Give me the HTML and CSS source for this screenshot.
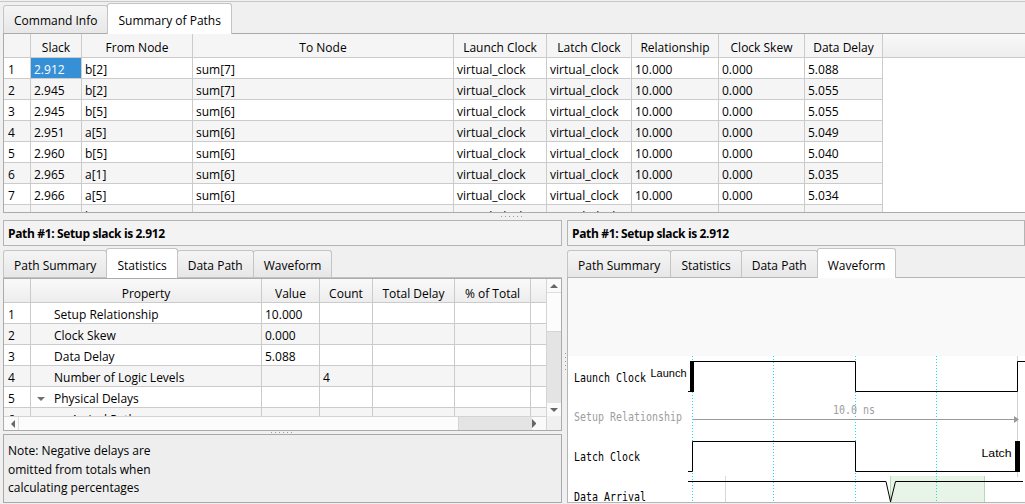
FILE: index.html
```html
<!DOCTYPE html>
<html>
<head>
<meta charset="utf-8">
<title>Timing Report</title>
<link rel="stylesheet" href="styles.css">
</head>
<body>
<div class="app">
  <div class="top-rule"></div>
  <div class="tabbar main">
    <div class="tab">Command Info</div>
    <div class="tab active">Summary of Paths</div>
  </div>
  <div class="paths-frame">
    <div class="prow head">
      <div class="c"></div><div class="c">Slack</div><div class="c">From Node</div><div class="c">To Node</div><div class="c">Launch Clock</div><div class="c">Latch Clock</div><div class="c">Relationship</div><div class="c">Clock Skew</div><div class="c">Data Delay</div><div class="c fill"></div>
    </div>
    <div class="prow"><div class="c n">1</div><div class="c sel">2.912</div><div class="c">b[2]</div><div class="c">sum[7]</div><div class="c">virtual_clock</div><div class="c">virtual_clock</div><div class="c">10.000</div><div class="c">0.000</div><div class="c">5.088</div><div class="c fill"></div></div>
    <div class="prow"><div class="c n">2</div><div class="c">2.945</div><div class="c">b[2]</div><div class="c">sum[7]</div><div class="c">virtual_clock</div><div class="c">virtual_clock</div><div class="c">10.000</div><div class="c">0.000</div><div class="c">5.055</div><div class="c fill"></div></div>
    <div class="prow"><div class="c n">3</div><div class="c">2.945</div><div class="c">b[5]</div><div class="c">sum[6]</div><div class="c">virtual_clock</div><div class="c">virtual_clock</div><div class="c">10.000</div><div class="c">0.000</div><div class="c">5.055</div><div class="c fill"></div></div>
    <div class="prow"><div class="c n">4</div><div class="c">2.951</div><div class="c">a[5]</div><div class="c">sum[6]</div><div class="c">virtual_clock</div><div class="c">virtual_clock</div><div class="c">10.000</div><div class="c">0.000</div><div class="c">5.049</div><div class="c fill"></div></div>
    <div class="prow"><div class="c n">5</div><div class="c">2.960</div><div class="c">b[5]</div><div class="c">sum[6]</div><div class="c">virtual_clock</div><div class="c">virtual_clock</div><div class="c">10.000</div><div class="c">0.000</div><div class="c">5.040</div><div class="c fill"></div></div>
    <div class="prow"><div class="c n">6</div><div class="c">2.965</div><div class="c">a[1]</div><div class="c">sum[6]</div><div class="c">virtual_clock</div><div class="c">virtual_clock</div><div class="c">10.000</div><div class="c">0.000</div><div class="c">5.035</div><div class="c fill"></div></div>
    <div class="prow"><div class="c n">7</div><div class="c">2.966</div><div class="c">a[5]</div><div class="c">sum[6]</div><div class="c">virtual_clock</div><div class="c">virtual_clock</div><div class="c">10.000</div><div class="c">0.000</div><div class="c">5.034</div><div class="c fill"></div></div>
    <div class="prow"><div class="c n">8</div><div class="c">2.967</div><div class="c">b[4]</div><div class="c">sum[6]</div><div class="c">virtual_clock</div><div class="c">virtual_clock</div><div class="c">10.000</div><div class="c">0.000</div><div class="c">5.033</div><div class="c fill"></div></div>
  </div>
  <div class="hsplit"><span class="dots-h"></span></div>
  <div class="bottom">
    <div class="left">
      <div class="pathbox">Path #1: Setup slack is 2.912</div>
      <div class="tabbar sub">
        <div class="tab">Path Summary</div>
        <div class="tab active">Statistics</div>
        <div class="tab">Data Path</div>
        <div class="tab">Waveform</div>
      </div>
      <div class="stats-pane">
        <div class="stats-table">
          <div class="st-upper">
            <div class="st-body">
              <div class="srow head"><div class="c"></div><div class="c">Property</div><div class="c">Value</div><div class="c">Count</div><div class="c">Total Delay</div><div class="c">% of Total</div><div class="c fill"></div></div>
              <div class="srow"><div class="c n">1</div><div class="c prop">Setup Relationship</div><div class="c">10.000</div><div class="c"></div><div class="c"></div><div class="c"></div><div class="c fill"></div></div>
              <div class="srow"><div class="c n">2</div><div class="c prop">Clock Skew</div><div class="c">0.000</div><div class="c"></div><div class="c"></div><div class="c"></div><div class="c fill"></div></div>
              <div class="srow"><div class="c n">3</div><div class="c prop">Data Delay</div><div class="c">5.088</div><div class="c"></div><div class="c"></div><div class="c"></div><div class="c fill"></div></div>
              <div class="srow"><div class="c n">4</div><div class="c prop">Number of Logic Levels</div><div class="c"></div><div class="c">4</div><div class="c"></div><div class="c"></div><div class="c fill"></div></div>
              <div class="srow"><div class="c n">5</div><div class="c prop"><span class="twisty"></span>Physical Delays</div><div class="c"></div><div class="c"></div><div class="c"></div><div class="c"></div><div class="c fill"></div></div>
              <div class="srow"><div class="c n">6</div><div class="c prop deep">Arrival Path</div><div class="c"></div><div class="c"></div><div class="c"></div><div class="c"></div><div class="c fill"></div></div>
            </div>
            <div class="vscroll">
              <div class="sb-btn"><span class="tri up"></span></div>
              <div class="thumb-v"></div>
              <div class="track"></div>
              <div class="sb-btn"><span class="tri down"></span></div>
            </div>
          </div>
          <div class="hbar">
            <div class="hscroll">
              <div class="sb-btn"><span class="tri left"></span></div>
              <div class="thumb-h"></div>
              <div class="track"></div>
              <div class="sb-btn"><span class="tri right"></span></div>
            </div>
            <div class="corner"></div>
          </div>
        </div>
        <div class="hsplit small"><span class="dots-h"></span></div>
        <div class="note">Note: Negative delays are<br>omitted from totals when<br>calculating percentages</div>
      </div>
    </div>
    <div class="vsplit"><span class="dots-v"></span></div>
    <div class="right">
      <div class="pathbox">Path #1: Setup slack is 2.912</div>
      <div class="tabbar sub">
        <div class="tab">Path Summary</div>
        <div class="tab">Statistics</div>
        <div class="tab">Data Path</div>
        <div class="tab active">Waveform</div>
      </div>
      <div class="wave-pane">
        <svg class="wave" width="457" height="224" viewBox="568 278 457 224" xmlns="http://www.w3.org/2000/svg">
          <rect x="568" y="278" width="457" height="78" fill="#f9f9f9"/>
          <rect x="890" y="476" width="94" height="30" fill="#e8f4e8"/>
          <line x1="890.5" y1="476" x2="890.5" y2="504" stroke="#b2dcb2"/>
          <line x1="984.5" y1="476" x2="984.5" y2="504" stroke="#b2dcb2"/>
          <line x1="725.5" y1="476" x2="725.5" y2="504" stroke="#d8d8d8"/>
          <line x1="1017.5" y1="356" x2="1017.5" y2="477" stroke="#d2d2d2"/>
          <g stroke="#19dcef" stroke-dasharray="1 2">
            <line x1="692.5" y1="356" x2="692.5" y2="504"/>
            <line x1="773.5" y1="356" x2="773.5" y2="504"/>
            <line x1="855.5" y1="356" x2="855.5" y2="504"/>
            <line x1="936.5" y1="356" x2="936.5" y2="504"/>
          </g>
          <g class="mono">
            <text x="574" y="382" textLength="72" lengthAdjust="spacingAndGlyphs">Launch Clock</text>
            <text x="574" y="421" textLength="108" lengthAdjust="spacingAndGlyphs" class="dim">Setup Relationship</text>
            <text x="833" y="414" textLength="42" lengthAdjust="spacingAndGlyphs" class="dim">10.0 ns</text>
            <text x="574" y="461" textLength="66" lengthAdjust="spacingAndGlyphs">Latch Clock</text>
            <text x="574" y="501" textLength="72" lengthAdjust="spacingAndGlyphs">Data Arrival</text>
          </g>
          <g class="sans">
            <text x="650.5" y="377" textLength="36" lengthAdjust="spacingAndGlyphs">Launch</text>
            <text x="981.5" y="457" textLength="30" lengthAdjust="spacingAndGlyphs">Latch</text>
          </g>
          <g fill="none" stroke="#000" stroke-width="1">
            <path d="M688 391.5 H690"/>
            <path d="M694 361.5 H855.5 V391.5 H1017.5 V361.5 H1025"/>
            <path d="M688 471.5 H692.5 V441.5 H855.5 V471.5 H1015"/>
            <path d="M688 481.5 H886 L891.5 506"/>
            <path d="M895.5 481.5 L889.5 506"/>
            <path d="M895.5 481.5 H1023"/>
          </g>
          <rect x="690" y="361" width="4" height="31" fill="#000"/>
          <rect x="1015" y="441" width="5" height="31" fill="#000"/>
          <line x1="693" y1="419.5" x2="1015" y2="419.5" stroke="#9a9a9a"/>
          <polygon points="1014,416 1019,419.5 1014,423" fill="#9a9a9a"/>
        </svg>
      </div>
    </div>
  </div>
</div>
</body>
</html>
```
FILE: styles.css
```css
* { box-sizing: border-box; }
html, body { margin: 0; padding: 0; }
body {
  width: 1025px;
  height: 504px;
  overflow: hidden;
  background: #f0f0f0;
  font-family: "Open Sans", "Noto Sans", sans-serif;
  font-size: 12px;
  color: #000;
}
.app { display: flex; flex-direction: column; height: 504px; }

.top-rule { height: 2px; margin-top: 1px; border-top: 1px solid #c8c8c8; }

/* tabs */
.tabbar { display: flex; align-items: flex-end; flex: none; }
.tabbar.main { height: 30px; padding-left: 3px; }
.tabbar.sub { height: 31px; }
.tab {
  height: 28px;
  padding: 0 10px 4px;
  border: 1px solid #c4c4c4;
  border-bottom: none;
  border-radius: 3px 3px 0 0;
  background: linear-gradient(#f5f5f5, #e7e7e7);
  display: flex;
  align-items: flex-end;
  line-height: 16px;
  margin-right: -1px;
  white-space: nowrap;
}
.tab.active {
  height: 31px;
  margin-bottom: -1px;
  padding-bottom: 5px;
  background: #fff;
  position: relative;
  z-index: 2;
}
.tabbar.sub .tab { height: 27px; padding-bottom: 3px; }
.tabbar.sub .tab.active { height: 30px; padding-bottom: 4px; }

/* top table */
.paths-frame {
  height: 180px;
  flex: none;
  margin-left: 3px;
  border: 1px solid #ababab;
  border-right: none;
  background: #fff;
  overflow: hidden;
}
.prow {
  display: grid;
  grid-template-columns: 27px 51px 111px 261px 93px 85px 87px 86px 78px 1fr;
}
.prow .c, .srow .c {
  height: 21px;
  padding: 4px 0 0 3px;
  line-height: 16px;
  border-right: 1px solid #cbcbcb;
  border-bottom: 1px solid #cbcbcb;
  white-space: nowrap;
  overflow: hidden;
}
.prow .c.n, .srow .c.n { padding-left: 4px; }
.prow .c.fill { border: none; }
.prow:nth-child(odd) .c:not(.fill),
.srow:nth-child(odd) .c { background: #f5f5f5; }
.prow.head .c, .srow.head .c {
  height: 24px;
  padding: 6px 0 0;
  text-align: center;
  background: linear-gradient(#f9f9f9, #ededed);
}
.srow.head .c { padding-top: 7px; }
.prow.head .c.fill { border-bottom: 1px solid #cbcbcb; }
.prow .c.sel { background: #3590d6; color: #fff; }

/* splitters */
.hsplit { height: 7px; flex: none; display: flex; justify-content: center; align-items: center; }
.hsplit.small { height: 3px; align-items: flex-start; padding-top: 1px; }
.dots-h {
  width: 24px;
  height: 1px;
  background: repeating-linear-gradient(90deg, #9c9c9c 0 1px, transparent 1px 4px);
}
.vsplit { width: 5px; flex: none; display: flex; align-items: center; justify-content: center; padding-left: 1px; }
.dots-v {
  width: 1px;
  height: 18px;
  background: repeating-linear-gradient(180deg, #9c9c9c 0 1px, transparent 1px 4px);
}

/* bottom */
.bottom { flex: 1; display: flex; min-height: 0; }
.left { width: 562px; flex: none; padding-left: 3px; display: flex; flex-direction: column; }
.right { flex: 1; display: flex; flex-direction: column; padding-bottom: 1px; min-width: 0; }

.pathbox {
  height: 26px;
  flex: none;
  border: 1px solid #b4b4b4;
  background: #f3f3f3;
  padding: 5px 0 0 4px;
  line-height: 16px;
  font-weight: 700;
  letter-spacing: -0.35px;
  white-space: nowrap;
}

.stats-pane { flex: 1; display: flex; flex-direction: column; border-top: 1px solid #c2c2c2; min-height: 0; }
.stats-table { height: 153px; flex: none; border: 1px solid #ababab; background: #fff; display: flex; flex-direction: column; }
.st-upper { height: 137px; display: flex; }
.st-body { width: 542px; overflow: hidden; }
.srow { display: grid; grid-template-columns: 27px 231px 58px 53px 82px 76px 15px; }
.srow .c.fill { border-right: none; }
.srow .c.prop { padding-left: 23px; }
.srow .c.prop.deep { padding-left: 40px; }
.twisty {
  display: inline-block;
  width: 0;
  height: 0;
  border-left: 4px solid transparent;
  border-right: 4px solid transparent;
  border-top: 4px solid #707070;
  margin: 0 9px 0 -17px;
  vertical-align: 2px;
}

.vscroll { width: 15px; display: flex; flex-direction: column; border-left: 1px solid #d4d4d4; background: #e4e4e4; }
.sb-btn { height: 13px; flex: none; background: #fafafa; display: flex; align-items: center; justify-content: center; }
.thumb-v { height: 40px; flex: none; background: #fcfcfc; border-top: 1px solid #dedede; border-bottom: 1px solid #d4d4d4; }
.track { flex: 1; }
.hbar { height: 14px; flex: none; display: flex; }
.hscroll { width: 542px; display: flex; border-top: 1px solid #d4d4d4; background: #e4e4e4; }
.hscroll .sb-btn { width: 14px; height: auto; }
.thumb-h { width: 441px; background: #fcfcfc; border-left: 1px solid #dedede; border-right: 1px solid #d4d4d4; }
.corner { flex: 1; background: #f0f0f0; border-left: 1px solid #d4d4d4; }
.tri { width: 0; height: 0; display: block; }
.tri.up { border-left: 4px solid transparent; border-right: 4px solid transparent; border-bottom: 4px solid #666; }
.tri.down { border-left: 4px solid transparent; border-right: 4px solid transparent; border-top: 4px solid #666; }
.tri.left { border-top: 4px solid transparent; border-bottom: 4px solid transparent; border-right: 4px solid #666; }
.tri.right { border-top: 4px solid transparent; border-bottom: 4px solid transparent; border-left: 4px solid #666; }

.note {
  flex: 1;
  border: 1px solid #a9a9a9;
  background: #eeeeee;
  padding: 7px 0 0 4px;
  line-height: 18.5px;
  margin-bottom: 1px;
}

.wave-pane { flex: 1; border: 1px solid #b6b6b6; border-right: none; background: #fff; overflow: hidden; }
.wave { display: block; }
.mono text { font-family: "DejaVu Sans Mono", monospace; font-size: 12px; fill: #000; }
.mono text.dim { fill: #9d9d9d; }
.sans text { font-family: "Liberation Sans", Arial, sans-serif; font-size: 11.5px; fill: #000; }
```
